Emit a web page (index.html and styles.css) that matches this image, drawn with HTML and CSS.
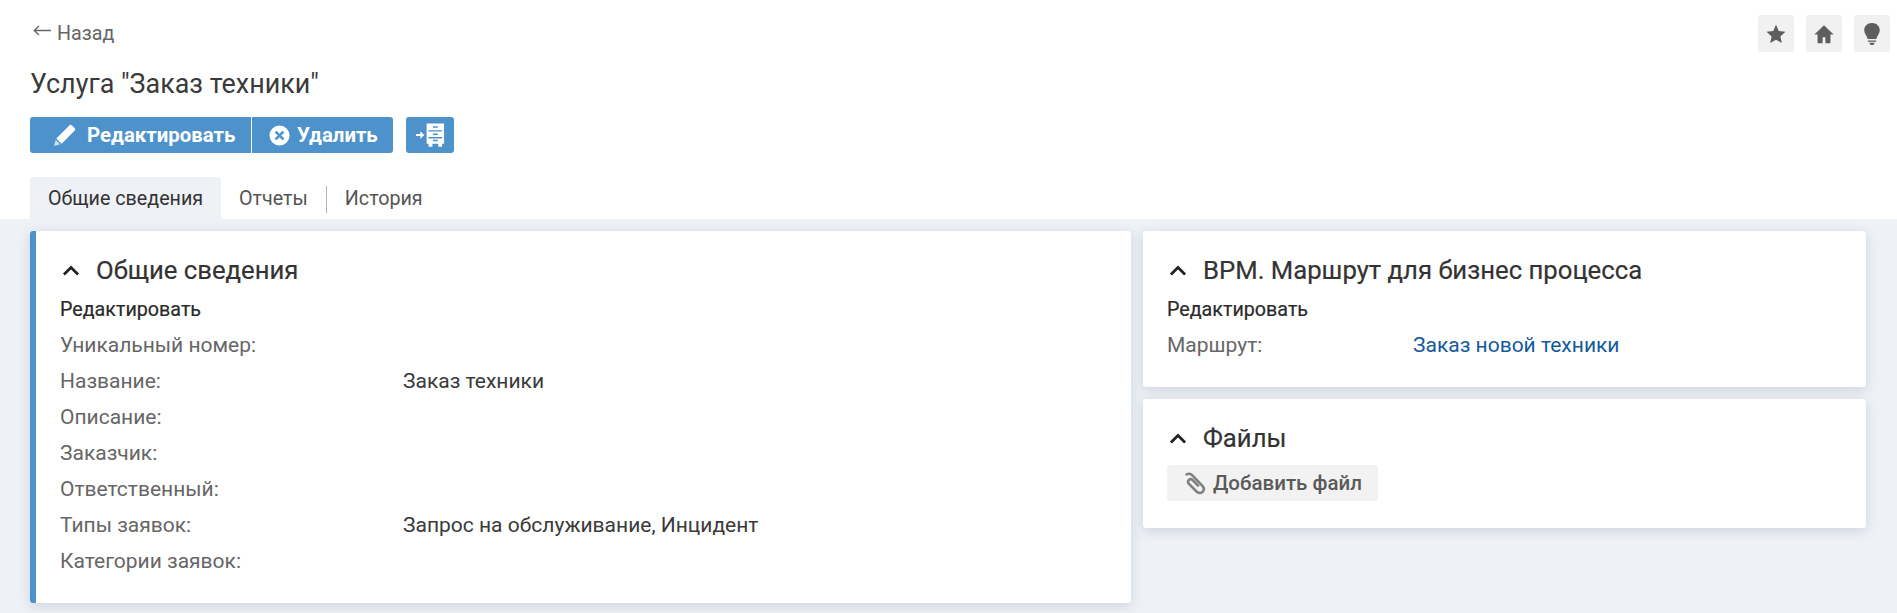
FILE: index.html
```html
<!DOCTYPE html>
<html lang="ru">
<head>
<meta charset="utf-8">
<title>Услуга "Заказ техники"</title>
<link rel="stylesheet" href="styles.css">
</head>
<body>
<header class="top">
  <div class="topbar">
    <a class="back"><svg class="back-ico" viewBox="0 0 18 12"><path d="M6 1 1.200 5.500 6 10M1.500 5.500H18" fill="none" stroke="#666" stroke-width="1.300"/></svg>Назад</a>
    <div class="quick">
      <span class="qbtn"><svg viewBox="0 0 24 24"><path d="M12 2l3 6.800 7.300.8-5.500 5 1.600 7.300L12 18.200l-6.400 3.700 1.600-7.300-5.500-5 7.300-.8z"/></svg></span>
      <span class="qbtn"><svg viewBox="0 0 24 24"><path d="M12 2.500 1.500 12.500H5V22h5.500v-6.500h3V22H19v-9.500h3.500z"/></svg></span>
      <span class="qbtn"><svg viewBox="0 0 24 24"><path d="M12 0C6.800 0 3.500 3.700 3.500 8c0 3.700 3 6 3.800 9.500h9.400c.8-3.500 3.800-5.800 3.800-9.500C20.500 3.700 17.200 0 12 0zM7.500 19h9v1.500h-9zM9 21.500h6L13.500 24h-3z"/></svg></span>
    </div>
  </div>
  <h1 class="title">Услуга "Заказ техники"</h1>
  <div class="actions">
    <div class="group">
      <button class="btn btn-edit"><svg viewBox="0 0 24 24"><path d="M17 1.500a2 2 0 0 1 2.800 0l2.700 2.700a2 2 0 0 1 0 2.800L9 20.500 3.500 15z" fill="#fff"/><path d="M2.800 16.500l4.700 4.700L1 23z" fill="#fff" opacity=".7"/></svg>Редактировать</button>
      <button class="btn btn-del"><svg viewBox="0 0 24 24"><circle cx="12" cy="12" r="11.500" fill="#fff"/><path d="M7.500 7.500l9 9M16.500 7.500l-9 9" stroke="#4d92cb" stroke-width="3"/></svg>Удалить</button>
    </div>
    <button class="btn btn-icon"><svg viewBox="0 0 32 26"><path d="M1 12h4.500V9l4 4-4 4v-3H1z" fill="#fff"/><path d="M12 1h18v21h-2v3h-4v-3h-6v3h-4v-3h-2zM14 9.500h14V8H14zM14 16.500h14V15H14z" fill="#fff" fill-rule="evenodd"/><path d="M18.500 4h5v1.500h-5zM18.500 11.500h5V13h-5zM18.500 18h5v1.500h-5z" fill="#4d92cb"/></svg></button>
  </div>
  <nav class="tabs">
    <a class="tab tab-active">Общие сведения</a>
    <a class="tab tab-sep">Отчеты</a>
    <a class="tab">История</a>
  </nav>
</header>
<main class="content">
  <section class="card card-main">
    <h2 class="card-title"><svg class="chev" viewBox="0 0 14 9"><path d="M1.200 7.800 7 2l5.800 5.800" fill="none" stroke="#222" stroke-width="2.200"/></svg>Общие сведения</h2>
    <a class="edit">Редактировать</a>
    <dl class="fields">
      <div class="row"><dt>Уникальный номер:</dt><dd></dd></div>
      <div class="row"><dt>Название:</dt><dd>Заказ техники</dd></div>
      <div class="row"><dt>Описание:</dt><dd></dd></div>
      <div class="row"><dt>Заказчик:</dt><dd></dd></div>
      <div class="row"><dt>Ответственный:</dt><dd></dd></div>
      <div class="row"><dt>Типы заявок:</dt><dd>Запрос на обслуживание, Инцидент</dd></div>
      <div class="row"><dt>Категории заявок:</dt><dd></dd></div>
    </dl>
  </section>
  <div class="side">
    <section class="card card-route">
      <h2 class="card-title"><svg class="chev" viewBox="0 0 14 9"><path d="M1.200 7.800 7 2l5.800 5.800" fill="none" stroke="#222" stroke-width="2.200"/></svg>BPM. Маршрут для бизнес процесса</h2>
      <a class="edit">Редактировать</a>
      <dl class="fields">
        <div class="row row-route"><dt>Маршрут:</dt><dd><a class="link">Заказ новой техники</a></dd></div>
      </dl>
    </section>
    <section class="card card-files">
      <h2 class="card-title"><svg class="chev" viewBox="0 0 14 9"><path d="M1.200 7.800 7 2l5.800 5.800" fill="none" stroke="#222" stroke-width="2.200"/></svg>Файлы</h2>
      <button class="add-file"><svg viewBox="0 0 24 24"><path d="M3.800 4.200c2-2 4.700-1.800 6.500.1l9.900 10.300c2 2.100 2.100 4.500.4 6.200-1.800 1.800-4.300 1.500-6.100-.3L7 12.800c-1.200-1.300-1.200-2.800-.1-3.900s2.700-1 3.800.2l6 6.300" fill="none" stroke="#808080" stroke-width="2.600"/></svg>Добавить файл</button>
    </section>
  </div>
</main>
</body>
</html>
```
FILE: styles.css
```css
* { box-sizing: border-box; }
html, body { margin: 0; padding: 0; }
body {
  width: 1897px;
  height: 613px;
  overflow: hidden;
  background: #eef1f6;
  font-family: Roboto, "Liberation Sans", sans-serif;
  font-size: 21px;
  color: #333;
}
.top { background: #fff; height: 219px; padding: 0 7px 0 30px; }
.topbar { display: flex; justify-content: space-between; height: 52px; padding-top: 15px; }
.back { display: flex; align-items: center; height: 36px; color: #666; font-size: 19.700px; }
.back-ico { width: 18px; height: 12px; margin: -4px 6px 0 3px; }
.quick { display: flex; gap: 12px; }
.qbtn {
  width: 36px; height: 37px; border-radius: 3px; background: #f1f1f1;
  display: flex; align-items: center; justify-content: center;
}
.qbtn svg { width: 22px; height: 22px; fill: #5e5e5e; }
.title { margin: 0; height: 65px; padding-top: 17px; font-size: 26.900px; line-height: 30px; font-weight: 400; color: #3a3a3a; }
.actions { display: flex; gap: 13px; height: 36px; }
.group { display: flex; gap: 1px; }
.btn {
  display: flex; align-items: center; height: 36px; border: 0; margin: 0;
  background: #4d92cb; color: #fff;
  font-family: inherit; font-size: 20.400px; font-weight: 700;
}
.btn svg { display: block; }
.btn-edit { width: 221px; padding: 0 0 0 23px; border-radius: 3px 0 0 3px; }
.btn-edit svg { width: 23px; height: 23px; margin-right: 11px; }
.btn-del { width: 141px; padding: 0 0 0 17px; border-radius: 0 3px 3px 0; }
.btn-del svg { width: 21px; height: 21px; margin-right: 7px; }
.btn-icon { width: 48px; padding: 0 0 0 9px; border-radius: 3px; }
.btn-icon svg { width: 31px; height: 26px; }
.tabs { display: flex; align-items: stretch; height: 42px; margin-top: 24px; }
.tab { display: flex; align-items: center; color: #555; font-size: 19.700px; padding: 0 18px; white-space: nowrap; }
.tab-active { background: #eef1f6; color: #333; border-radius: 3px 3px 0 0; width: 191px; }
.tab-sep { position: relative; padding-right: 19px; }
.tab-sep::after { content: ""; position: absolute; right: 0; top: 9px; height: 27px; width: 1px; background: #b5b5b5; }
.content { display: flex; gap: 12px; padding: 12px 31px 0 30px; align-items: flex-start; }
.card {
  background: #fff; border-radius: 3px; padding: 24px;
  box-shadow: 0 3px 12px rgba(90, 110, 140, .22);
}
.card-main { width: 1101px; height: 372px; border-left: 6px solid #4d92cb; padding: 24px 24px 0 24px; }
.side { width: 723px; display: flex; flex-direction: column; gap: 12px; }
.card-route { height: 156px; }
.card-files { height: 129px; }
.card-title {
  display: flex; align-items: center; margin: 0; height: 30px;
  font-size: 25.700px; font-weight: 400; color: #333; -webkit-text-stroke: .2px #333;
}
.chev { width: 18px; height: 11px; margin: 0 16px 0 2px; }
.edit { display: block; margin-top: 13px; height: 24px; line-height: 24px; font-size: 19.700px; font-weight: 400; color: #2a2a2a; -webkit-text-stroke: .2px #2a2a2a; }
.fields { margin: 5px 0 0; }
.row { display: flex; height: 36px; line-height: 24px; padding-top: 6px; }
.row dt { width: 343px; color: #666; }
.row dd { margin: 0; color: #3a3a3a; }
.row-route dt { width: 246px; }
.link { color: #155a9c; }
.add-file {
  display: flex; align-items: center; height: 36px; width: 211px;
  margin: 12px 0 0 0; padding: 0 0 0 15px; border: 0; border-radius: 3px;
  background: #f2f2f2; color: #5a5a5a;
  font-family: inherit; font-size: 20.500px; font-weight: 500;
}
.add-file svg { width: 24px; height: 24px; margin-right: 7px; }
```
